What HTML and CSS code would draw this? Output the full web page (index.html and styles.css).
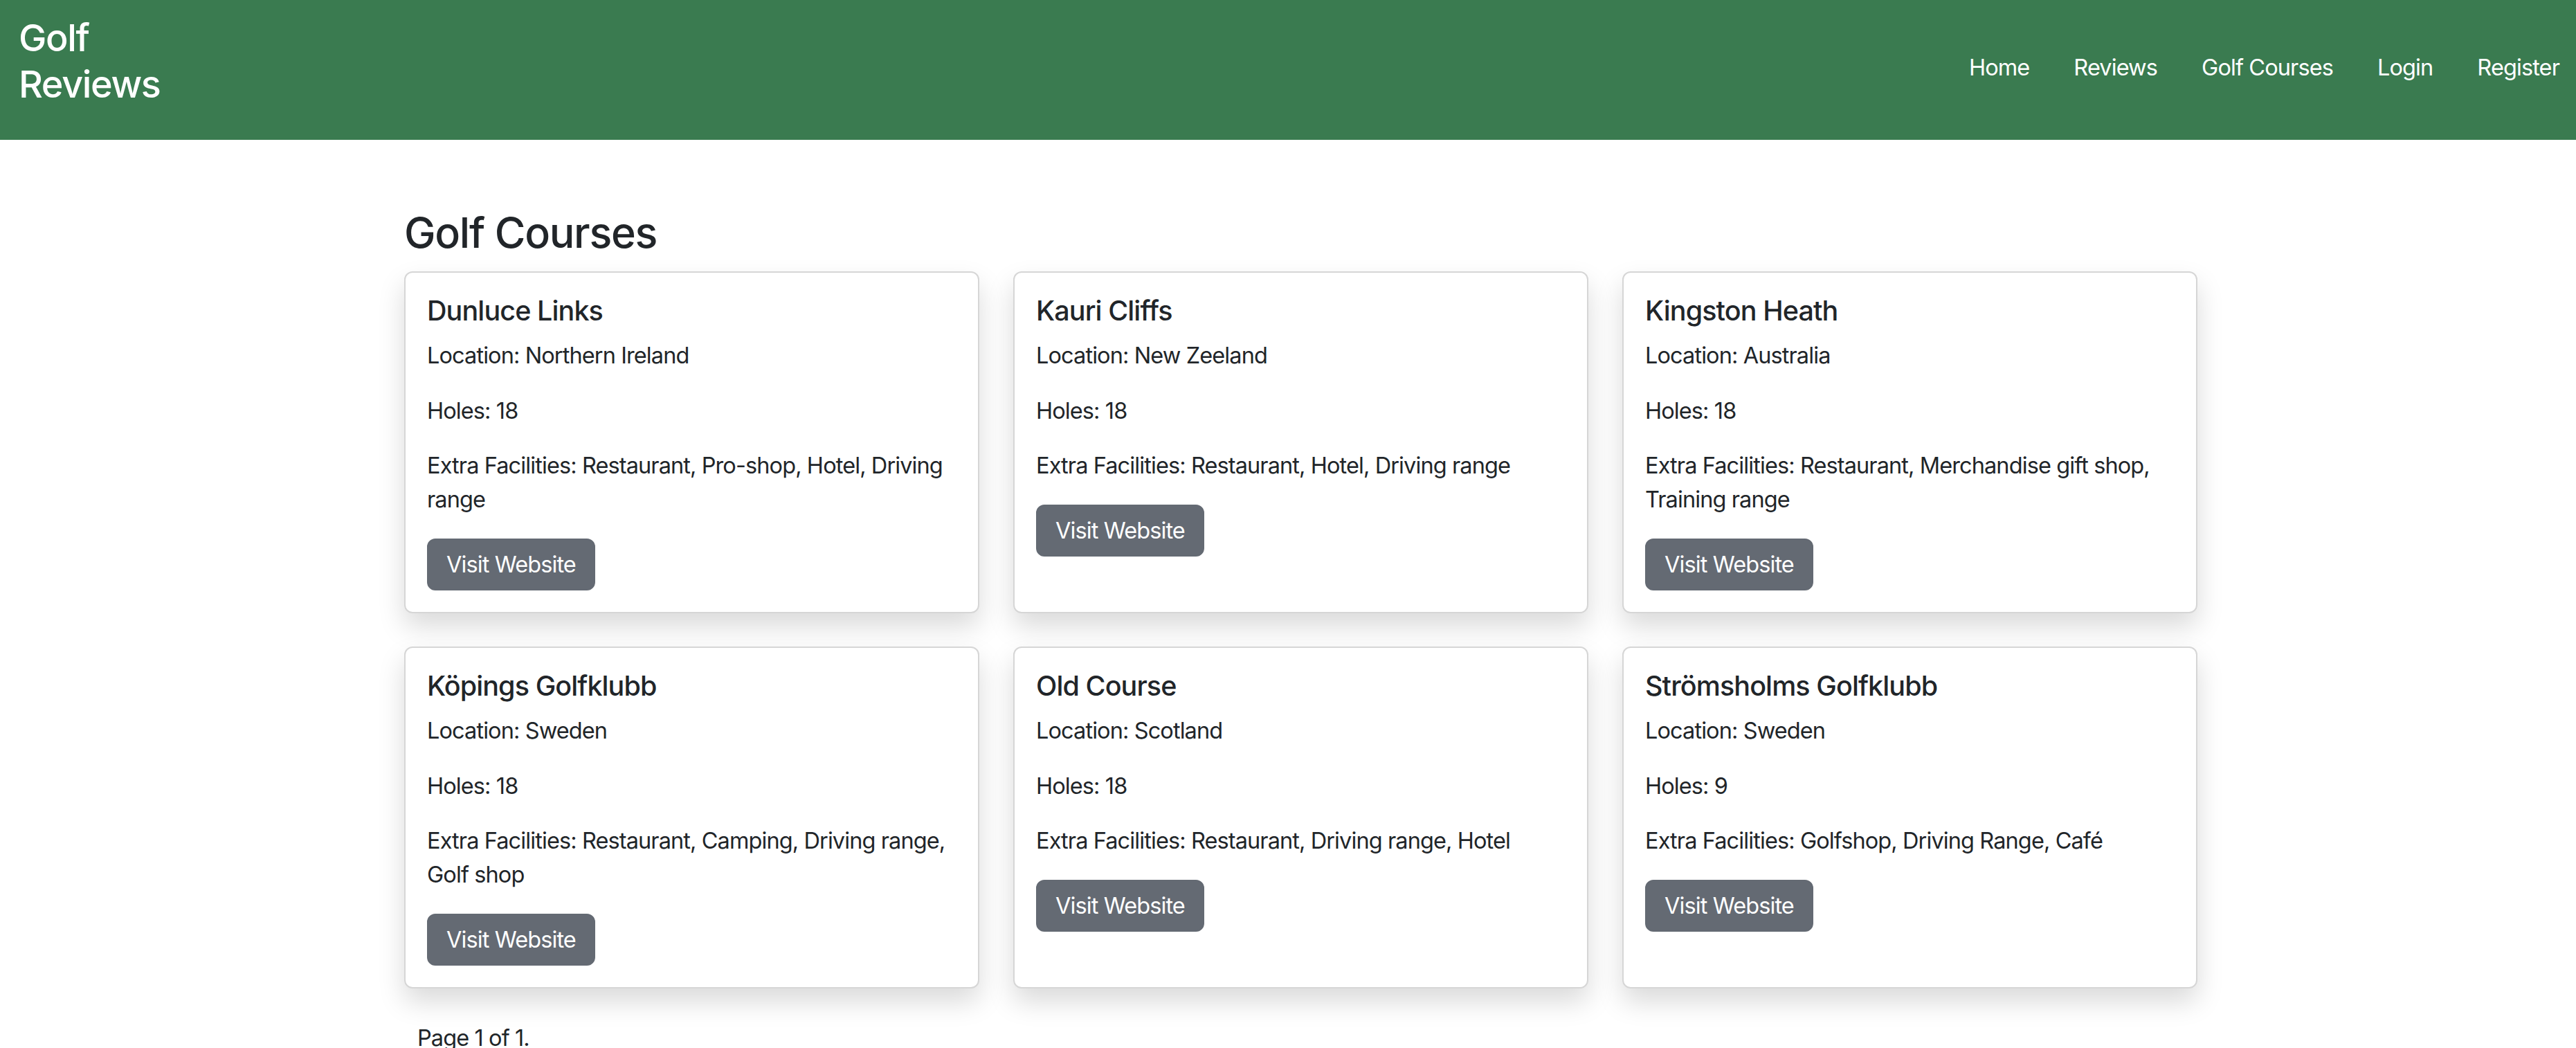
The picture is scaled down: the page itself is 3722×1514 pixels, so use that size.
FILE: index.html
```html
<!DOCTYPE html>
<html lang="en">
<head>
<meta charset="utf-8">
<title>Golf Courses - Golf Reviews</title>
<link rel="stylesheet" href="styles.css">
</head>
<body>
<header class="navbar">
  <a class="brand" href="#">Golf Reviews</a>
  <nav>
    <ul class="nav">
      <li><a href="#">Home</a></li>
      <li><a href="#">Reviews</a></li>
      <li><a href="#">Golf Courses</a></li>
      <li><a href="#">Login</a></li>
      <li><a href="#">Register</a></li>
    </ul>
  </nav>
</header>
<main class="content">
  <h2 class="page-title">Golf Courses</h2>
  <div class="grid">
    <div class="card">
      <h5 class="card-title">Dunluce Links</h5>
      <p>Location: Northern Ireland</p>
      <p>Holes: 18</p>
      <p>Extra Facilities: Restaurant, Pro-shop, Hotel, Driving range</p>
      <a class="btn" href="#">Visit Website</a>
    </div>
    <div class="card">
      <h5 class="card-title">Kauri Cliffs</h5>
      <p>Location: New Zeeland</p>
      <p>Holes: 18</p>
      <p>Extra Facilities: Restaurant, Hotel, Driving range</p>
      <a class="btn" href="#">Visit Website</a>
    </div>
    <div class="card">
      <h5 class="card-title">Kingston Heath</h5>
      <p>Location: Australia</p>
      <p>Holes: 18</p>
      <p>Extra Facilities: Restaurant, Merchandise gift shop, Training range</p>
      <a class="btn" href="#">Visit Website</a>
    </div>
    <div class="card">
      <h5 class="card-title">Köpings Golfklubb</h5>
      <p>Location: Sweden</p>
      <p>Holes: 18</p>
      <p>Extra Facilities: Restaurant, Camping, Driving range, Golf shop</p>
      <a class="btn" href="#">Visit Website</a>
    </div>
    <div class="card">
      <h5 class="card-title">Old Course</h5>
      <p>Location: Scotland</p>
      <p>Holes: 18</p>
      <p>Extra Facilities: Restaurant, Driving range, Hotel</p>
      <a class="btn" href="#">Visit Website</a>
    </div>
    <div class="card">
      <h5 class="card-title">Strömsholms Golfklubb</h5>
      <p>Location: Sweden</p>
      <p>Holes: 9</p>
      <p>Extra Facilities: Golfshop, Driving Range, Café</p>
      <a class="btn" href="#">Visit Website</a>
    </div>
  </div>
  <p class="pager">Page 1 of 1.</p>
</main>
</body>
</html>
```
FILE: styles.css
```css
html, body {
  margin: 0;
  padding: 0;
  background: #ffffff;
}

body {
  font-family: Inter, "Liberation Sans", sans-serif;
  font-size: 32.5px;
  line-height: 48.7px;
  color: #212529;
  letter-spacing: -0.9px;
}

.navbar {
  height: 202px;
  box-sizing: border-box;
  background: #3a7b50;
  display: flex;
  justify-content: space-between;
  align-items: flex-start;
  padding: 21px 24px 0 27px;
}

.brand {
  display: block;
  width: min-content;
  color: #ffffff;
  font-size: 54px;
  font-weight: 500;
  line-height: 67px;
  letter-spacing: -1.4px;
  text-decoration: none;
}

.nav {
  display: flex;
  gap: 64px;
  list-style: none;
  margin: 52px 0 0;
  padding: 0;
}

.nav a {
  color: #ffffff;
  text-decoration: none;
  font-size: 32.5px;
  line-height: 49px;
}

.content {
  padding: 96px 0 0 584px;
}

.page-title {
  font-size: 61px;
  font-weight: 500;
  line-height: 77px;
  letter-spacing: -1.3px;
  margin: 0 0 17px;
}

.grid {
  display: grid;
  grid-template-columns: repeat(3, 831px);
  column-gap: 49px;
  row-gap: 48px;
}

.card {
  box-sizing: border-box;
  background: #ffffff;
  border: 2px solid #d6d6d6;
  border-radius: 12px;
  box-shadow: 0 19px 38px rgba(0, 0, 0, 0.15);
  padding: 31px;
}

.card-title {
  font-size: 39.5px;
  font-weight: 500;
  line-height: 49px;
  letter-spacing: -0.9px;
  margin: 0 0 16px;
}

.card p {
  margin: 0 0 31px;
}

.btn {
  display: inline-block;
  background: #646a73;
  border: 2px solid #646a73;
  border-radius: 12px;
  color: #ffffff;
  padding: 11px 26px;
  font-size: 32.5px;
  line-height: 49px;
  text-decoration: none;
}

.pager {
  margin: 48px 0 0 19px;
}
```
